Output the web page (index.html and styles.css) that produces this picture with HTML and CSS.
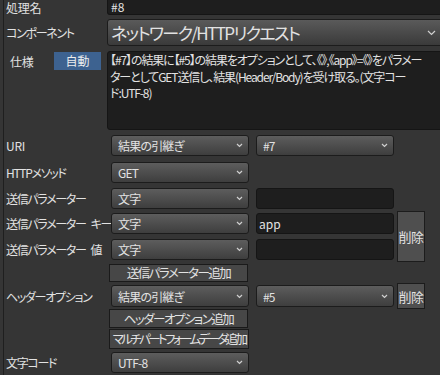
FILE: index.html
```html
<!DOCTYPE html>
<html lang="ja">
<head>
  <meta charset="UTF-8">
  <title>処理設定</title>
  <link rel="stylesheet" href="styles.css">
</head>
<body>

<div class="panel">

  <!--処理名-->
  <div class="row row-name">
    <span class="label kanji">処理名</span>
    <div class="text-input name-input">#8</div>
  </div>

  <!--コンポーネント-->
  <div class="row row-comp">
    <span class="label">コンポーネント</span>
    <div class="select comp-select">
      <span>ネットワーク/HTTPリクエスト</span>
      <svg class="chev" width="9" height="6" viewBox="0 0 9 6"><polyline points="1,1 4.5,4.5 8,1"/></svg>
    </div>
  </div>

  <!--仕様-->
  <div class="row row-spec">
    <div class="spec-head">
      <span class="label kanji spec-label">仕様</span>
      <span class="badge">自動</span>
    </div>
    <div class="spec-text">【#7】の結果に【#5】の結果をオプションとして、《》,《app》=《》をパラメー<br>ターとしてGET送信し、結果(Header/Body)を受け取る。(文字コー<br>ド:UTF-8)</div>
  </div>

  <!--URI-->
  <div class="row row-uri">
    <span class="label kanji">URI</span>
    <div class="select col1"><span>結果の引継ぎ</span><svg class="chev" width="7" height="5" viewBox="0 0 7 5"><polyline points="1,1 3.5,3.5 6,1"/></svg></div>
    <div class="select col2"><span>#7</span><svg class="chev" width="7" height="5" viewBox="0 0 7 5"><polyline points="1,1 3.5,3.5 6,1"/></svg></div>
  </div>

  <div class="row row-method">
    <span class="label">HTTPメソッド</span>
    <div class="select col1"><span>GET</span><svg class="chev" width="7" height="5" viewBox="0 0 7 5"><polyline points="1,1 3.5,3.5 6,1"/></svg></div>
  </div>

  <div class="row row-param">
    <span class="label">送信パラメーター</span>
    <div class="select col1"><span>文字</span><svg class="chev" width="7" height="5" viewBox="0 0 7 5"><polyline points="1,1 3.5,3.5 6,1"/></svg></div>
    <div class="text-input col2"></div>
  </div>

  <!--キーと値 + 削除-->
  <div class="pair">
    <div class="pair-rows">
      <div class="row row-key">
        <span class="label">送信パラメーター<span class="gap"></span>キー</span>
        <div class="select col1"><span>文字</span><svg class="chev" width="7" height="5" viewBox="0 0 7 5"><polyline points="1,1 3.5,3.5 6,1"/></svg></div>
        <div class="text-input col2">app</div>
      </div>
      <div class="row row-val">
        <span class="label">送信パラメーター<span class="gap"></span>値</span>
        <div class="select col1"><span>文字</span><svg class="chev" width="7" height="5" viewBox="0 0 7 5"><polyline points="1,1 3.5,3.5 6,1"/></svg></div>
        <div class="text-input col2"></div>
      </div>
    </div>
    <a class="btn-del btn-del-tall" href="javascript:;">削除</a>
  </div>

  <div class="row row-add">
    <span class="label"></span>
    <a class="btn-add" href="javascript:;">送信パラメーター追加</a>
  </div>

  <div class="row row-header">
    <span class="label">ヘッダーオプション</span>
    <div class="select col1"><span>結果の引継ぎ</span><svg class="chev" width="7" height="5" viewBox="0 0 7 5"><polyline points="1,1 3.5,3.5 6,1"/></svg></div>
    <div class="select col2"><span>#5</span><svg class="chev" width="7" height="5" viewBox="0 0 7 5"><polyline points="1,1 3.5,3.5 6,1"/></svg></div>
    <a class="btn-del" href="javascript:;">削除</a>
  </div>

  <div class="row row-add2">
    <span class="label"></span>
    <a class="btn-add" href="javascript:;">ヘッダーオプション追加</a>
  </div>

  <div class="row row-add3">
    <span class="label"></span>
    <a class="btn-add btn-multi" href="javascript:;">マルチパートフォームデータ追加</a>
  </div>

  <div class="row row-charset">
    <span class="label">文字コード</span>
    <div class="select col1"><span>UTF-8</span><svg class="chev" width="7" height="5" viewBox="0 0 7 5"><polyline points="1,1 3.5,3.5 6,1"/></svg></div>
  </div>

</div>

</body>
</html>
```

FILE: styles.css
```css
* {
  margin: 0;
  padding: 0;
  box-sizing: border-box;
}

body {
  width: 440px;
  height: 375px;
  overflow: hidden;
  background-color: #353535;
  font-family: "Noto Sans CJK JP", "Noto Sans", sans-serif;
  font-feature-settings: "palt";
  font-size: 12px;
  color: #e2e2e2;
}

/*左の縦線*/
.panel {
  width: 450px;
  height: 375px;
  margin-left: 3px;
  border-left: 1px solid #1f1f1f;
  padding-left: 2px;
  display: flex;
  flex-direction: column;
}

.row {
  display: flex;
  align-items: center;
}

/*カタカナが多いラベルは詰める*/
.label {
  width: 101px;
  flex-shrink: 0;
  white-space: nowrap;
  letter-spacing: -1.3px;
}

.label.kanji {
  letter-spacing: -0.2px;
}

.gap {
  display: inline-block;
  width: 5px;
}

/*入力欄*/
.text-input {
  height: 21px;
  background-color: #1e1e1e;
  border: 1px solid #151515;
  border-radius: 3px;
  padding-left: 2px;
  line-height: 19px;
}

/*プルダウン*/
.select {
  height: 21px;
  display: flex;
  align-items: center;
  justify-content: space-between;
  padding: 0 5px 0 6px;
  border: 1px solid #1c1c1c;
  border-radius: 3px;
  background: linear-gradient(#5d5d5d, #3e3e3e);
  letter-spacing: -0.8px;
}

.chev {
  fill: none;
  stroke: #d0d0d0;
  stroke-width: 1.2;
}

.col1 {
  width: 138px;
  margin-left: 4px;
}

.col2 {
  width: 138px;
  margin-left: 7px;
}

.row-name {
  height: 15px;
}

.name-input {
  width: 340px;
  height: 15px;
  border-top: none;
  border-radius: 0 0 3px 3px;
  line-height: 14px;
  padding-left: 3px;
}

.row-comp {
  height: 27px;
  margin-top: 4px;
}

.comp-select {
  width: 340px;
  height: 27px;
  padding: 0 10px 0 3px;
  font-size: 17px;
  letter-spacing: -1.6px;
  border-radius: 3px 0 0 3px;
  background: linear-gradient(#5a5a5a, #3a3a3a);
}

.row-spec {
  height: 79px;
  margin-top: 5px;
  align-items: flex-start;
}

.spec-head {
  width: 101px;
  flex-shrink: 0;
  display: flex;
  align-items: center;
  padding-top: 1px;
}

.spec-label {
  width: 48px;
  padding-left: 4px;
}

.badge {
  width: 47px;
  height: 18px;
  background-color: #3d6290;
  text-align: center;
  line-height: 18px;
  color: #eee;
}

.spec-text {
  width: 340px;
  height: 79px;
  background-color: #1e1e1e;
  border: 1px solid #151515;
  border-radius: 3px 0 0 3px;
  padding: 0 0 0 2px;
  line-height: 16.5px;
  letter-spacing: -1.1px;
  white-space: nowrap;
  overflow: hidden;
}

.row-uri {
  height: 21px;
  margin-top: 5px;
}

.row-method {
  height: 21px;
  margin-top: 6px;
}

.row-param {
  height: 21px;
  margin-top: 5px;
}

.pair {
  display: flex;
  align-items: flex-start;
  margin-top: 2px;
}

.row-key {
  height: 21px;
  margin-top: 2px;
}

.row-val {
  height: 21px;
  margin-top: 5px;
}

/*削除ボタン*/
.btn-del {
  width: 28px;
  height: 26px;
  margin-left: 3px;
  background-color: #4f4f4f;
  border: 1px solid #1c1c1c;
  color: #e2e2e2;
  text-decoration: none;
  font-size: 13px;
  display: flex;
  align-items: center;
  justify-content: center;
  letter-spacing: -0.5px;
}

.btn-del-tall {
  height: 51px;
}

/*追加ボタン*/
.btn-add {
  width: 139px;
  height: 18px;
  margin-left: 2px;
  background-color: #474747;
  border: 1px solid #1a1a1a;
  color: #e2e2e2;
  text-decoration: none;
  text-align: center;
  line-height: 16px;
  font-size: 12.5px;
  letter-spacing: -1.5px;
  white-space: nowrap;
}

.btn-multi {
  width: 140px;
  height: 20px;
  line-height: 18px;
  letter-spacing: -2.6px;
}

.row-add {
  height: 18px;
  margin-top: 2px;
}

.row-header {
  height: 26px;
  margin-top: 1px;
}

.row-header .select {
  height: 22px;
}

.row-add2 {
  height: 19px;
}

.row-add2 .btn-add {
  height: 19px;
  line-height: 17px;
}

.row-add3 {
  height: 20px;
  margin-top: 1px;
}

.row-charset {
  height: 21px;
  margin-top: 3px;
}
```
